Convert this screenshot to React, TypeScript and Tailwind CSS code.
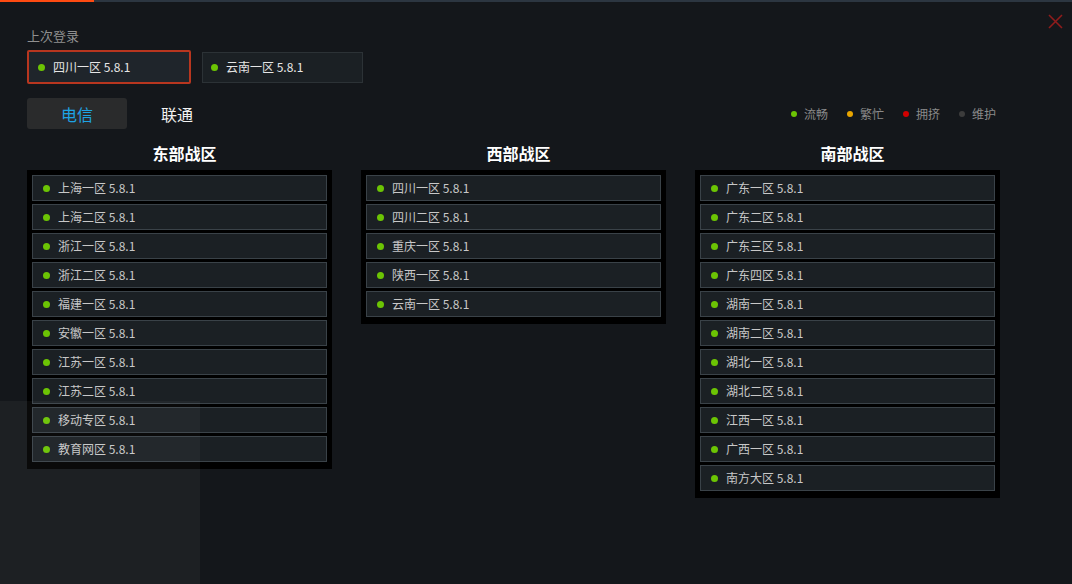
import React from "react";

const font = { fontFamily: '"Noto Sans CJK SC", "Noto Sans", sans-serif' };

const regions: { title: string; servers: string[] }[] = [
  {
    title: "东部战区",
    servers: ["上海一区", "上海二区", "浙江一区", "浙江二区", "福建一区", "安徽一区", "江苏一区", "江苏二区", "移动专区", "教育网区"],
  },
  {
    title: "西部战区",
    servers: ["四川一区", "四川二区", "重庆一区", "陕西一区", "云南一区"],
  },
  {
    title: "南部战区",
    servers: ["广东一区", "广东二区", "广东三区", "广东四区", "湖南一区", "湖南二区", "湖北一区", "湖北二区", "江西一区", "广西一区", "南方大区"],
  },
];

const legend = [
  { label: "流畅", dot: "bg-[#6cc404]" },
  { label: "繁忙", dot: "bg-[#e9a500]" },
  { label: "拥挤", dot: "bg-[#d10000]" },
  { label: "维护", dot: "bg-[#3c3c3c]" },
];

function Dot({ className = "bg-[#6cc404]" }: { className?: string }) {
  return <span className={`inline-block w-[7px] h-[7px] rounded-full ${className}`} />;
}

function ServerRow({ name }: { name: string }) {
  return (
    <div className="h-[26px] flex items-center border border-[#3a4248] bg-[#1b2024] pl-[10px] gap-[8px] text-[12px] leading-[16px] text-[#c8c8c8]">
      <Dot />
      <span className="-mt-[1px]">{name} 5.8.1</span>
    </div>
  );
}

export default function App() {
  return (
    <div className="relative w-[1072px] h-[584px] overflow-hidden bg-[#14171b]" style={font}>
      {/* top strip */}
      <div className="h-[2px] flex bg-[#2c3641]">
        <div className="w-[94px] bg-[#ff4b12]" />
      </div>

      {/* close */}
      <button className="absolute right-[9px] top-[14px] w-[15px] h-[15px] text-[#8f1c1c]">
        <svg viewBox="0 0 15 15" width="15" height="15" fill="none" stroke="currentColor" strokeWidth="1.6">
          <path d="M1 1 L14 14 M14 1 L1 14" />
        </svg>
      </button>

      <div className="pl-[27px] pt-[24px]">
        <div className="text-[13px] text-[#909090] leading-[20px]">上次登录</div>

        <div className="flex items-center gap-[11px] mt-[4px]">
          <div className="w-[164px] h-[34px] rounded-[2px] border-2 border-[#b8361f] bg-[#1f252b] flex items-center pl-[9px] gap-[8px] text-[12px] text-[#e6e6e6]">
            <Dot />
            <span>四川一区 5.8.1</span>
          </div>
          <div className="w-[161px] h-[31px] border border-[#2c3236] bg-[#1b2024] flex items-center pl-[8px] gap-[8px] text-[12px] text-[#e6e6e6]">
            <Dot />
            <span>云南一区 5.8.1</span>
          </div>
        </div>

        <div className="flex items-center justify-between mt-[14px] pr-[76px]">
          <div className="flex items-center">
            <div className="w-[100px] h-[31px] rounded-[3px] bg-[#2a2b2c] flex items-center justify-center text-[16px] text-[#1ea3e4]">
              电信
            </div>
            <div className="ml-[34px] text-[16px] text-[#f2f2f2]">联通</div>
          </div>
          <div className="flex items-center gap-[19px] text-[12px] text-[#8a8a8a]">
            {legend.map((l) => (
              <div key={l.label} className="flex items-center gap-[7px]">
                <span className={`inline-block w-[6px] h-[6px] rounded-full ${l.dot}`} />
                <span>{l.label}</span>
              </div>
            ))}
          </div>
        </div>

        <div className="flex items-start gap-[29px] mt-[12px]">
          {regions.map((r) => (
            <div key={r.title} className="w-[305px]">
              <div className="text-center text-[16px] font-bold text-white leading-[24px] pl-[10px]">{r.title}</div>
              <div className="bg-black px-[5px] pt-[5px] pb-[7px] flex flex-col gap-[3px] mt-[5px]">
                {r.servers.map((s) => (
                  <ServerRow key={s} name={s} />
                ))}
              </div>
            </div>
          ))}
        </div>
      </div>

      {/* faint background panel bleeding through */}
      <div className="absolute left-0 top-[401px] w-[200px] h-[183px] bg-white/[0.04] pointer-events-none" />
    </div>
  );
}
